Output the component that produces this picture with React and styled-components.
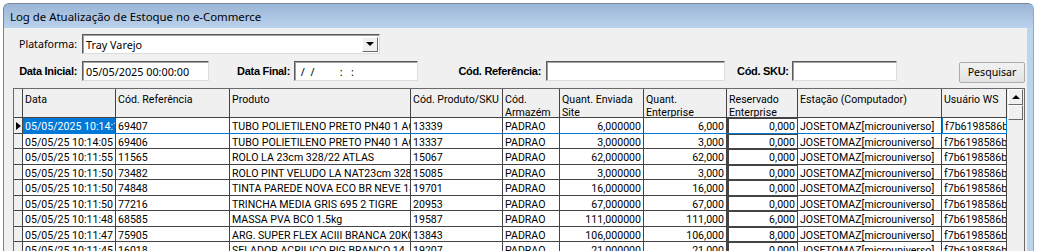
import React from 'react';
import styled, { createGlobalStyle } from 'styled-components';

const GlobalStyle = createGlobalStyle`
  html, body {
    margin: 0;
    padding: 0;
    background: #fff;
    overflow: hidden;
    font-family: "Liberation Sans", Arial, sans-serif;
  }
`;

// column template shared by the header and the rows
const COLUMNS = '9px 93px 114px 181px 92px 57px 84px 83px 71px 144px 65px';
const LINE = '#444';
const HILITE = '#0078d7';
const GRID_FONT = 'Roboto, "Liberation Sans", Arial, sans-serif';

const rows = [
  ['05/05/2025 10:14:11', '69407', 'TUBO POLIETILENO PRETO PN40 1 AGUA', '13339', 'PADRAO', '6,000000', '6,000', '0,000'],
  ['05/05/25 10:14:05', '69406', 'TUBO POLIETILENO PRETO PN40 1 AGUA', '13337', 'PADRAO', '3,000000', '3,000', '0,000'],
  ['05/05/25 10:11:55', '11565', 'ROLO LA 23cm 328/22 ATLAS', '15067', 'PADRAO', '62,000000', '62,000', '0,000'],
  ['05/05/25 10:11:50', '73482', 'ROLO PINT VELUDO LA NAT23cm 328', '15085', 'PADRAO', '3,000000', '3,000', '0,000'],
  ['05/05/25 10:11:50', '74848', 'TINTA PAREDE NOVA ECO BR NEVE 18L', '19701', 'PADRAO', '16,000000', '16,000', '0,000'],
  ['05/05/25 10:11:50', '77216', 'TRINCHA MEDIA GRIS 695 2 TIGRE', '20953', 'PADRAO', '67,000000', '67,000', '0,000'],
  ['05/05/25 10:11:48', '68585', 'MASSA PVA BCO 1.5kg', '19587', 'PADRAO', '111,000000', '111,000', '6,000'],
  ['05/05/25 10:11:47', '75905', 'ARG. SUPER FLEX ACIII BRANCA 20KG', '13843', 'PADRAO', '106,000000', '106,000', '8,000'],
  ['05/05/25 10:11:45', '16018', 'SELADOR ACRILICO PIG BRANCO 14', '19207', 'PADRAO', '21,000000', '21,000', '0,000'],
];

const Window = styled.div`
  margin: 3px 0 0 3px;
  width: 1031px;
  height: 300px;
  box-sizing: border-box;
  border: 1px solid #7b8796;
  border-right-color: #4cc2ee;
  border-bottom: none;
  border-radius: 6px 6px 0 0;
  background: #bcd4ec;
  overflow: hidden;
`;

const TitleBar = styled.div`
  height: 24px;
  display: flex;
  align-items: center;
  padding-left: 6px;
  background: linear-gradient(#9bb5d6, #bad2ec);
  font-family: "Noto Sans", sans-serif;
  font-size: 11.4px;
  color: #000;
`;

const Client = styled.div`
  margin-right: 6px;
  height: 100%;
  background: #f0f0f0;
  padding-top: 6px;
  box-sizing: border-box;
`;

const FormRow = styled.div`
  display: flex;
  align-items: center;
  height: 20px;
  margin-top: ${(p) => p.$top || 0}px;
`;

const Field = styled.div`
  display: flex;
  align-items: center;
  margin-left: ${(p) => p.$offset || 0}px;
`;

const Label = styled.label`
  width: ${(p) => p.$width}px;
  margin-right: ${(p) => p.$gap}px;
  text-align: right;
  white-space: nowrap;
  font-family: ${(p) => (p.$bold ? '"Liberation Sans", Arial, sans-serif' : '"Noto Sans", sans-serif')};
  font-weight: ${(p) => (p.$bold ? 700 : 400)};
  font-size: ${(p) => (p.$bold ? 11 : 10.6)}px;
  letter-spacing: ${(p) => (p.$bold ? '-0.3px' : '0')};
  color: #000;
`;

const TextBox = styled.div`
  width: ${(p) => p.$width}px;
  height: 20px;
  box-sizing: border-box;
  background: #fff;
  border: 1px solid;
  border-color: #5a5a5a #dcdcdc #dcdcdc #5a5a5a;
  box-shadow: inset 1px 1px 0 #a0a0a0;
  padding: 0 3px;
  display: flex;
  align-items: center;
  font-family: "Noto Sans", sans-serif;
  font-size: 10.8px;
  white-space: pre;
  color: #000;
`;

const Combo = styled(TextBox)`
  justify-content: space-between;
  padding-right: 1px;
`;

const DropButton = styled.div`
  width: 16px;
  height: 15px;
  box-sizing: border-box;
  background: #f0f0f0;
  border: 1px solid;
  border-color: #fff #696969 #696969 #fff;
  display: flex;
  align-items: center;
  justify-content: center;

  &::after {
    content: '';
    border-left: 4px solid transparent;
    border-right: 4px solid transparent;
    border-top: 4px solid #000;
  }
`;

const Button = styled.button`
  margin-left: ${(p) => p.$offset}px;
  width: 66px;
  height: 21px;
  margin-top: 2px;
  background: linear-gradient(#f2f2f2, #e3e3e3);
  border: 1px solid #adadad;
  border-radius: 2px;
  font-family: "Noto Sans", sans-serif;
  font-size: 10.6px;
  color: #000;
  padding: 0;
`;

const Grid = styled.div`
  margin: 7px 2px 0 9px;
  height: 170px;
  display: flex;
  background: #fff;
  border: 1px solid #6a6a6a;
  overflow: hidden;
`;

const Table = styled.div`
  flex: 1;
  overflow: hidden;
`;

const Row = styled.div`
  display: grid;
  grid-template-columns: ${COLUMNS};
  height: ${(p) => p.$height}px;
`;

const HeadCell = styled.div`
  background: #f0f0f0;
  border-right: 1px solid ${LINE};
  border-bottom: 1px solid ${LINE};
  padding: 4px 1px 0 2px;
  font-family: ${GRID_FONT};
  font-size: 10.6px;
  line-height: 13px;
  color: #000;
  overflow: hidden;
`;

const Indicator = styled.div`
  background: #f0f0f0;
  border-right: 1px solid ${LINE};
  border-bottom: 1px solid ${LINE};
  display: flex;
  align-items: center;
  justify-content: flex-start;

  ${(p) =>
    p.$current &&
    `&::after {
      content: '';
      margin: 2px 0 0 2px;
      border-top: 4px solid transparent;
      border-bottom: 4px solid transparent;
      border-left: 5px solid #000;
    }`}
`;

const Cell = styled.div`
  border-right: 1px solid ${(p) => (p.$focusEdge ? HILITE : LINE)};
  border-left: ${(p) => (p.$focusEdge ? `1px solid ${HILITE}` : 'none')};
  border-bottom: 1px solid ${(p) => (p.$focus ? HILITE : LINE)};
  background: ${(p) => (p.$selected ? HILITE : '#fff')};
  color: ${(p) => (p.$selected ? '#fff' : '#000')};
  padding: 2px 2px 0;
  font-family: ${GRID_FONT};
  font-size: 10.6px;
  line-height: 13px;
  white-space: nowrap;
  overflow: hidden;
  display: flex;
  align-items: flex-start;
  justify-content: ${(p) => (p.$right ? 'flex-end' : 'flex-start')};
`;

const SunkenCell = styled(Cell)`
  padding: 0;
  align-items: stretch;
`;

const Sunken = styled.div`
  flex: 1;
  border-top: 1px solid ${LINE};
  border-left: 2px solid ${LINE};
  padding: 1px 2px 0 0;
  display: flex;
  align-items: flex-start;
  justify-content: flex-end;
`;

const ScrollBar = styled.div`
  width: 17px;
  background: #f0f0f0;
  display: flex;
  flex-direction: column;
  align-items: center;
`;

const ArrowButton = styled.div`
  width: 15px;
  height: 16px;
  box-sizing: border-box;
  background: #f0f0f0;
  border: 1px solid;
  border-color: #fff #696969 #696969 #fff;
  display: flex;
  align-items: center;
  justify-content: center;

  &::after {
    content: '';
    border-left: 4px solid transparent;
    border-right: 4px solid transparent;
    border-bottom: 4px solid #000;
  }
`;

const Thumb = styled.div`
  width: 15px;
  height: 15px;
  box-sizing: border-box;
  background: #f0f0f0;
  border: 1px solid;
  border-color: #fff #696969 #696969 #fff;
`;

const headers = [
  'Data',
  'Cód. Referência',
  'Produto',
  'Cód. Produto/SKU',
  'Cód. Armazém',
  'Quant. Enviada Site',
  'Quant. Enterprise',
  'Reservado Enterprise',
  'Estação (Computador)',
  'Usuário WS',
];

const App = () => (
  <>
    <GlobalStyle />
    <Window>
      <TitleBar>Log de Atualização de Estoque no e-Commerce</TitleBar>
      <Client>
        <FormRow>
          <Label $width={73} $gap={5}>Plataforma:</Label>
          <Combo $width={298}>
            Tray Varejo
            <DropButton />
          </Combo>
        </FormRow>
        <FormRow $top={7}>
          <Field>
            <Label $bold $width={73} $gap={5}>Data Inicial:</Label>
            <TextBox $width={127}>05/05/2025 00:00:00</TextBox>
          </Field>
          <Field $offset={27}>
            <Label $bold $width={54} $gap={4}>Data Final:</Label>
            <TextBox $width={124}>{' /  /         :   :'}</TextBox>
          </Field>
          <Field $offset={39}>
            <Label $bold $width={84} $gap={5}>Cód. Referência:</Label>
            <TextBox $width={179} />
          </Field>
          <Field $offset={12}>
            <Label $bold $width={48} $gap={7}>Cód. SKU:</Label>
            <TextBox $width={105} />
          </Field>
          <Button $offset={62}>Pesquisar</Button>
        </FormRow>
        <Grid>
          <Table>
            <Row $height={29}>
              <Indicator />
              {headers.map((h) => (
                <HeadCell key={h}>{h}</HeadCell>
              ))}
            </Row>
            {rows.map((r, i) => {
              const first = i === 0;
              return (
                <Row key={i} $height={15.5}>
                  <Indicator $current={first} />
                  <Cell $selected={first} $focus={first}>{r[0]}</Cell>
                  <Cell $focus={first}>{r[1]}</Cell>
                  <Cell $focus={first}>{r[2]}</Cell>
                  <Cell $focus={first}>{r[3]}</Cell>
                  <Cell $focus={first}>{r[4]}</Cell>
                  <Cell $focus={first} $right>{r[5]}</Cell>
                  <Cell $focus={first} $right>{r[6]}</Cell>
                  <SunkenCell $focus={first}>
                    <Sunken>{r[7]}</Sunken>
                  </SunkenCell>
                  <Cell $focus={first}>JOSETOMAZ[microuniverso]</Cell>
                  <Cell $focus={first} $focusEdge={first}>f7b6198586bd4e21</Cell>
                </Row>
              );
            })}
          </Table>
          <ScrollBar>
            <ArrowButton />
            <Thumb />
          </ScrollBar>
        </Grid>
      </Client>
    </Window>
  </>
);

export default App;
